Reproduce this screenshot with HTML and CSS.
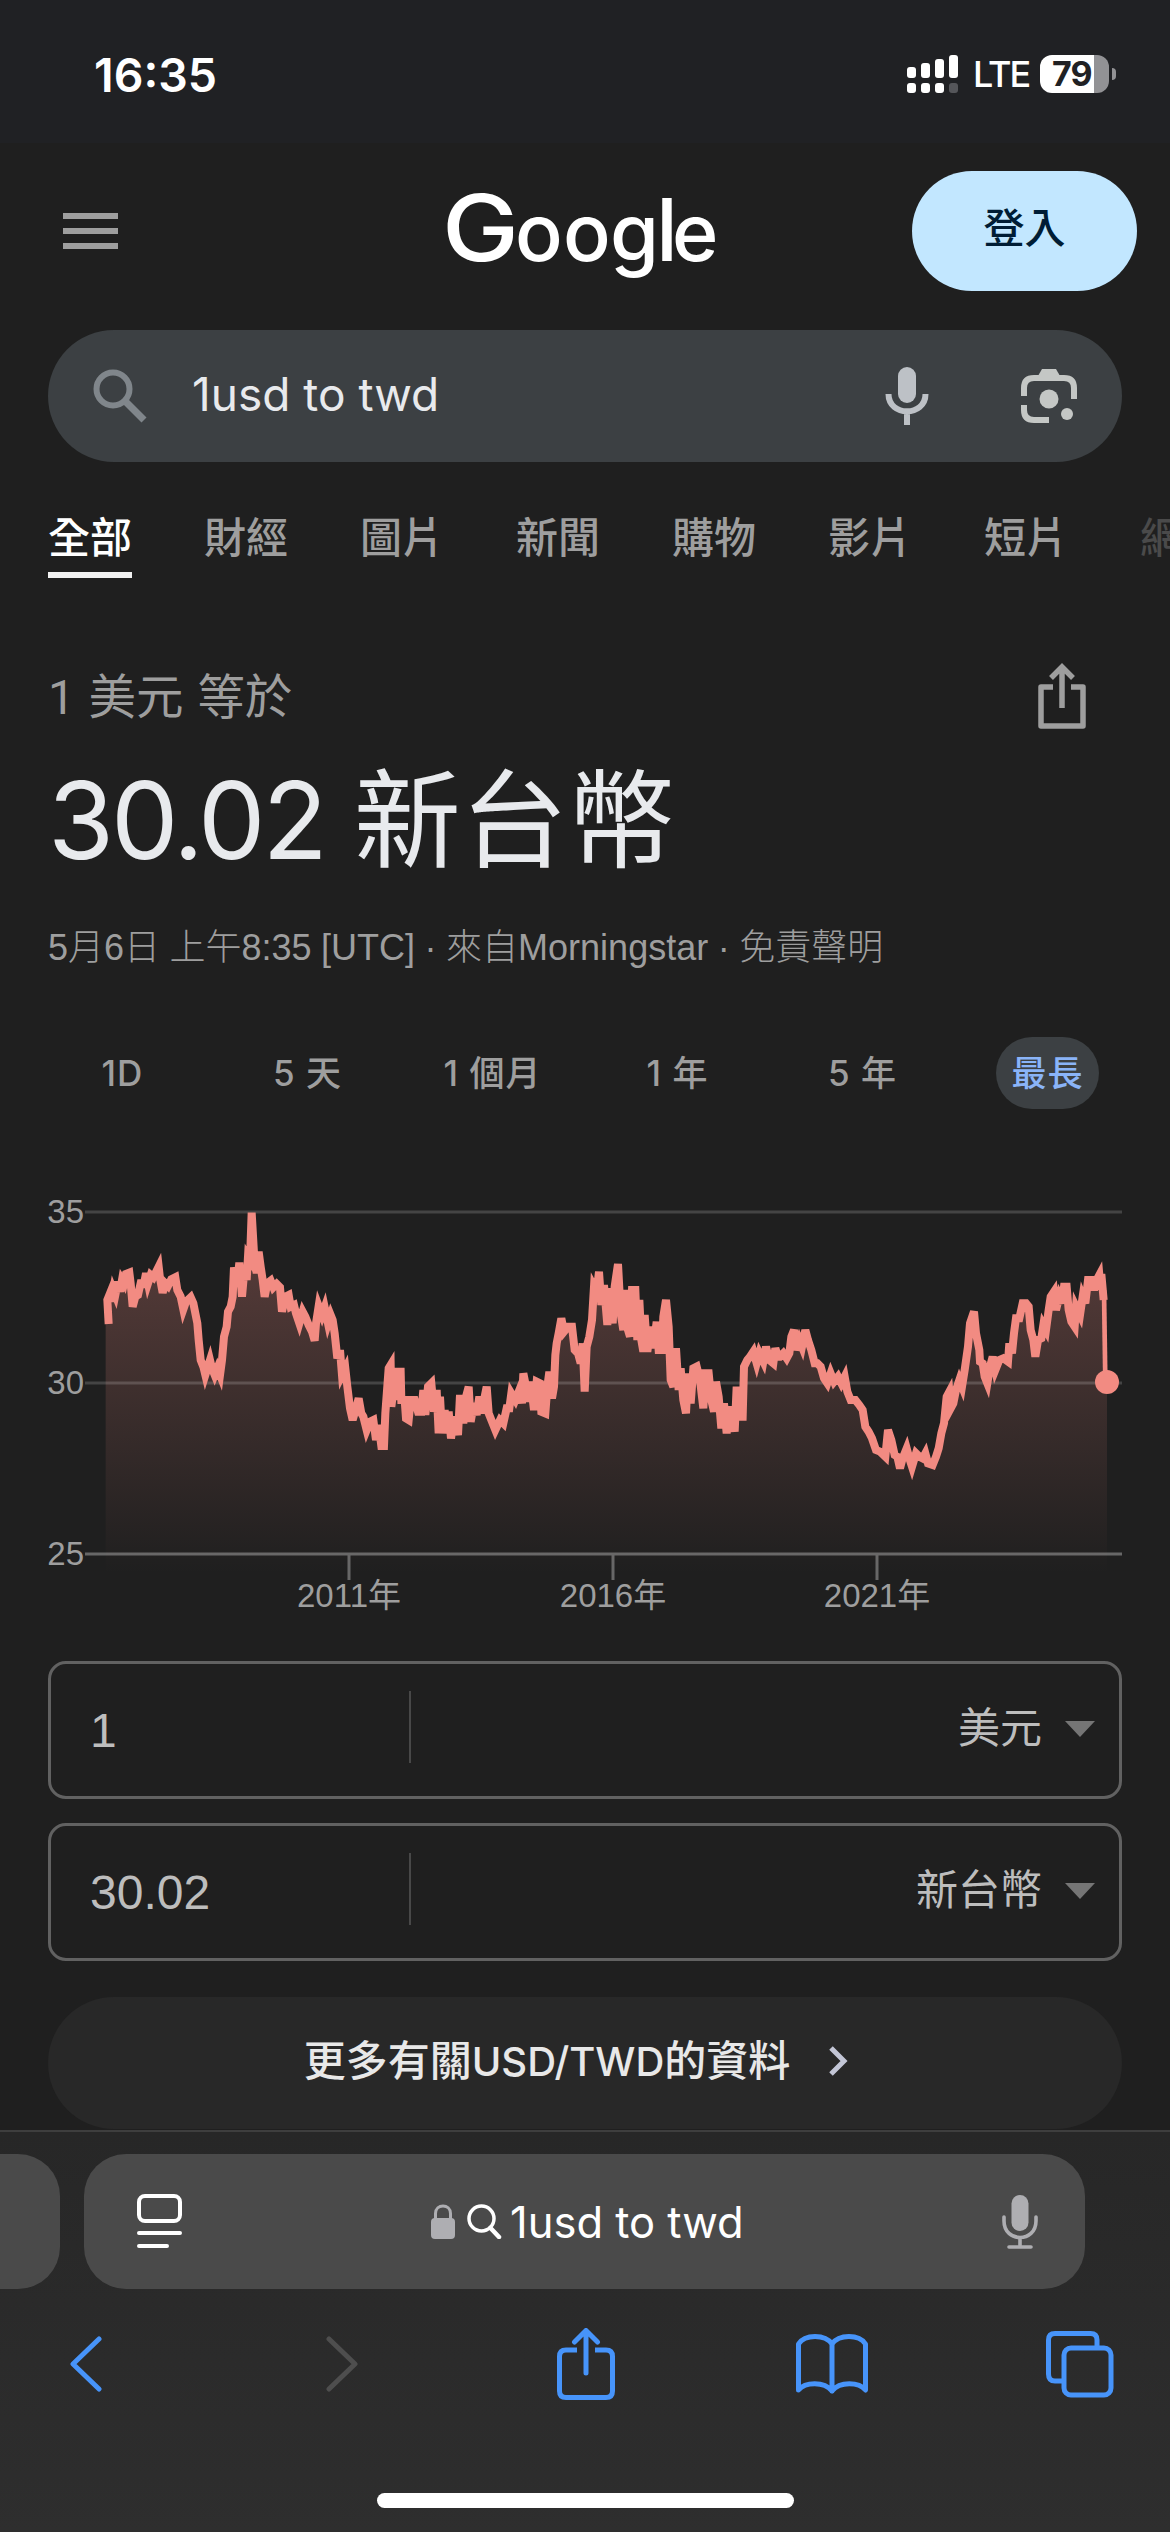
FILE: index.html
```html
<!DOCTYPE html>
<html lang="zh-Hant">
<head>
  <meta charset="UTF-8">
  <title>1usd to twd</title>
  <link rel="stylesheet" href="styles.css">
</head>
<body>
  <div class="status">
    <span class="time">16:35</span>
    <div class="status-right">
      <svg class="signal" width="52" height="38" viewBox="0 0 52 38" fill="#fff">
        <rect x="0" y="12" width="9" height="11" rx="3"/>
        <rect x="14" y="8" width="9" height="15" rx="3"/>
        <rect x="28" y="4" width="9" height="19" rx="3"/>
        <rect x="42" y="0" width="9" height="23" rx="3"/>
        <rect x="0" y="28" width="9" height="10" rx="3"/>
        <rect x="14" y="28" width="9" height="10" rx="3"/>
        <rect x="28" y="28" width="9" height="10" rx="3"/>
        <rect x="42" y="28" width="9" height="10" rx="3" fill="#55565a"/>
      </svg>
      <span class="lte">LTE</span>
      <div class="battery"><span>79</span></div>
      <div class="battery-tip"></div>
    </div>
  </div>

  <header class="header">
    <div class="menu"><i></i><i></i><i></i></div>
    <svg class="logo" width="276" height="110" viewBox="0 0 276 110" fill="#fff">
      <text class="logo-g" x="-6" y="77" textLength="77" lengthAdjust="spacingAndGlyphs">G</text>
      <text y="77"><tspan x="67">o</tspan><tspan x="115">o</tspan><tspan x="162">g</tspan><tspan class="logo-l" x="208">l</tspan><tspan x="224">e</tspan></text>
    </svg>
    <button class="login">登入</button>
  </header>

  <div class="search">
    <svg class="search-icon" width="54" height="54" viewBox="0 0 54 54" fill="none" stroke="#80868b">
      <circle cx="20" cy="20" r="16.5" stroke-width="6"/>
      <path d="M32 32L51 51" stroke-width="7"/>
    </svg>
    <span class="query">1usd to twd</span>
    <svg class="mic" width="44" height="58" viewBox="0 0 44 58">
      <rect x="13" y="0" width="18" height="36" rx="9" fill="#bdc1c6"/>
      <path d="M3.500 27C3.500 50 40.500 50 40.500 27M22 45V58" fill="none" stroke="#bdc1c6" stroke-width="6"/>
    </svg>
    <svg class="lens" width="56" height="54" viewBox="0 0 56 54">
      <path d="M3 27V19Q3 9 13 9H43Q53 9 53 19V30M3 36V41Q3 51 13 51H28" fill="none" stroke="#c4c7c5" stroke-width="6"/>
      <path d="M17 7L21 0H35L39 7Z" fill="#c4c7c5"/>
      <circle cx="28" cy="30" r="9.500" fill="#c4c7c5"/>
      <circle cx="46" cy="45" r="6" fill="#c4c7c5"/>
    </svg>
  </div>

  <nav class="tabs">
    <a class="active">全部</a>
    <a>財經</a>
    <a>圖片</a>
    <a>新聞</a>
    <a>購物</a>
    <a>影片</a>
    <a>短片</a>
    <a class="faded">網頁</a>
  </nav>

  <section class="rate">
    <div class="rate-top">
      <span class="from">1 美元 等於</span>
      <svg width="48" height="66" viewBox="0 0 48 66" fill="none" stroke="#9e9e9e" stroke-width="5.500">
        <path d="M15 24H3V63H45V24H33" stroke-linejoin="round"/>
        <path d="M24 45V6M13 15L24 4L35 15"/>
      </svg>
    </div>
    <div class="amount"><span class="number">30.02</span>新台幣</div>
    <div class="source">5月6日 上午8:35 [UTC] · 來自Morningstar · 免責聲明</div>
  </section>

  <div class="ranges">
    <span>1D</span>
    <span>5 天</span>
    <span>1 個月</span>
    <span>1 年</span>
    <span>5 年</span>
    <span class="selected">最長</span>
  </div>

  <!-- plot units are thirds of a pixel -->
  <svg class="chart" viewBox="-156 -30 3222 1290">
    <defs>
      <linearGradient id="fade" gradientUnits="userSpaceOnUse" x1="0" y1="36" x2="0" y2="1120">
        <stop offset="0" stop-color="#f28b82" stop-opacity=".29"/>
        <stop offset="1" stop-color="#f28b82" stop-opacity="0"/>
      </linearGradient>
    </defs>
    <path id="area" fill="url(#fade)"/>
    <g class="grid">
      <path d="M-45 36H3066M-45 549H3066"/>
      <path class="base" d="M-45 1062H3066M747 1062V1140M1539 1062V1140M2331 1062V1140"/>
    </g>
    <path id="line"/>
    <path class="drop" d="M3012 270L3016 546"/>
    <circle cx="3021" cy="546" r="36" fill="#f28b82"/>
    <g class="axis">
      <text x="-158" y="70">35</text>
      <text x="-158" y="583">30</text>
      <text x="-158" y="1096">25</text>
      <text x="747" y="1222" text-anchor="middle">2011年</text>
      <text x="1539" y="1222" text-anchor="middle">2016年</text>
      <text x="2331" y="1222" text-anchor="middle">2021年</text>
    </g>
  </svg>

  <div class="field">
    <span class="value">1</span>
    <span class="currency">美元</span>
    <i class="arrow"></i>
  </div>
  <div class="field">
    <span class="value">30.02</span>
    <span class="currency">新台幣</span>
    <i class="arrow"></i>
  </div>

  <div class="more">
    <span>更多有關<b>USD/TWD</b>的資料</span>
    <svg width="20" height="30" viewBox="0 0 20 30" fill="none" stroke="#c3c6d6" stroke-width="5"><path d="M3 2L16 15L3 28"/></svg>
  </div>

  <footer class="browser">
    <div class="address-row">
      <div class="prev-tab"></div>
      <div class="address">
        <svg class="reader" width="46" height="56" viewBox="0 0 46 56" fill="none" stroke="#fff" stroke-width="4" stroke-linecap="round">
          <rect x="2" y="2" width="41" height="25" rx="6"/>
          <path d="M2 39H43M2 52H30"/>
        </svg>
        <svg class="lock" width="24" height="35" viewBox="0 0 24 35">
          <rect y="14" width="24" height="21" rx="4" fill="#aeaeb2"/>
          <path d="M4.500 15V9.500C4.500-.500 19.500-.500 19.500 9.500V15" fill="none" stroke="#aeaeb2" stroke-width="3"/>
        </svg>
        <svg class="find" width="35" height="35" viewBox="0 0 35 35" fill="none" stroke="#fff" stroke-width="3.500" stroke-linecap="round">
          <circle cx="14.500" cy="14.500" r="12.500"/>
          <path d="M23.500 24L32 33" stroke-width="4.500"/>
        </svg>
        <span>1usd to twd</span>
        <svg class="dictate" width="36" height="54" viewBox="0 0 36 54">
          <rect x="9.500" width="17" height="36" rx="8.500" fill="#aeaeb2"/>
          <path d="M2 22V26C2 48 34 48 34 26V22M18 43V52M7 52H29" fill="none" stroke="#aeaeb2" stroke-width="3.600" stroke-linecap="round"/>
        </svg>
      </div>
    </div>
    <div class="toolbar">
      <svg class="back" width="32" height="56" viewBox="0 0 32 56"><path d="M29 3L3 28L29 53"/></svg>
      <svg class="forward" width="32" height="56" viewBox="0 0 32 56"><path d="M3 3L29 28L3 53"/></svg>
      <svg class="share" width="58" height="72" viewBox="0 0 58 72">
        <path d="M20 22H9Q2.500 22 2.500 28.500V63Q2.500 69.500 9 69.500H49Q55.500 69.500 55.500 63V28.500Q55.500 22 49 22H38" stroke-linecap="butt"/>
        <path d="M29 45V3M17.500 14L29 2.500L40.500 14"/>
      </svg>
      <svg class="book" width="72" height="60" viewBox="0 0 72 60">
        <path d="M36 57V10C29 0 9 0 2.500 10V56C9 48 28 47 36 57C44 47 63 48 69.500 56V10C63 0 43 0 36 10"/>
      </svg>
      <svg class="windows" width="68" height="67" viewBox="0 0 68 67">
        <path d="M51 16V9Q51 2.500 44.500 2.500H9Q2.500 2.500 2.500 9V43Q2.500 50 9 50H17"/>
        <rect x="18" y="17" width="47" height="47" rx="7"/>
      </svg>
    </div>
    <div class="home"></div>
  </footer>
  <script src="chart.js"></script>
</body>
</html>
```
FILE: styles.css
```css
* {
  box-sizing: border-box;
}
body {
  margin: 0;
  width: 1170px;
  height: 2532px;
  overflow: hidden;
  display: flex;
  flex-direction: column;
  background: #1f1f1f;
  color: #fff;
  font-family: Inter, "Noto Sans CJK TC", sans-serif;
}
svg {
  display: block;
  flex: none;
}

/* status bar */
.status {
  height: 143px;
  flex: none;
  padding: 0 54px 0 94px;
  display: flex;
  justify-content: space-between;
  background: #202124;
}
.time {
  margin-top: 47px;
  font-size: 46.5px;
  line-height: 56px;
  font-weight: 600;
}
.status-right {
  display: flex;
  align-items: center;
  height: 38px;
  margin-top: 55px;
}
.lte {
  width: 81px;
  padding-left: 14px;
  font-size: 36px;
  font-weight: 500;
  letter-spacing: -2px;
}
.battery {
  width: 69px;
  height: 38px;
  border-radius: 12px;
  background: linear-gradient(90deg, #fff 54px, #929295 54px);
  color: #202124;
  font-size: 34px;
  line-height: 38px;
  font-weight: 700;
  letter-spacing: -1px;
  padding-left: 12px;
}
.battery-tip {
  width: 4px;
  height: 12px;
  margin-left: 3px;
  border-radius: 0 4px 4px 0;
  background: #929295;
}

/* page header */
.header {
  height: 187px;
  flex: none;
  padding: 28px 33px 0 63px;
  display: flex;
  align-items: flex-start;
}
.menu {
  width: 55px;
  padding-top: 42px;
  display: flex;
  flex-direction: column;
  gap: 9px;
}
.menu i {
  height: 6px;
  background: #9e9e9e;
}
.logo {
  margin: 13px 0 0 330px;
  overflow: visible;
  font-weight: 500;
  font-size: 79px;
}
.logo-g {
  font-size: 92px;
}
.logo-l {
  font-size: 87px;
}
.login {
  width: 225px;
  height: 120px;
  margin-left: auto;
  padding: 0 0 12px;
  border: none;
  border-radius: 60px;
  background: #c2e7ff;
  color: #001d35;
  font: 500 41px Inter, "Noto Sans CJK TC", sans-serif;
}

/* search box */
.search {
  height: 132px;
  flex: none;
  margin: 0 48px;
  padding: 0 45px;
  display: flex;
  align-items: center;
  border-radius: 66px;
  background: #3c4043;
}
.query {
  flex: 1;
  margin: -5px 0 0 45px;
  font-size: 46px;
  color: #e8eaed;
}
.mic {
  margin-right: 92px;
}

.tabs {
  height: 118px;
  flex: none;
  padding: 40px 0 0 48px;
  display: flex;
  gap: 72px;
  overflow: hidden;
  font-size: 42px;
  line-height: 64px;
  font-weight: 500;
  color: #9e9e9e;
}
.tabs a {
  flex: none;
  height: 76px;
  padding-top: 4px;
}
.tabs .active {
  color: #fff;
  border-bottom: 6px solid #f1f1f1;
}
.tabs .faded {
  color: #4a4a4a;
}

/* exchange rate */
.rate {
  height: 405px;
  flex: none;
  padding: 83px 84px 0 48px;
}
.rate-top {
  height: 66px;
  display: flex;
  justify-content: space-between;
}
.from {
  padding-top: 2px;
  font-family: Roboto, "Noto Sans CJK TC", sans-serif;
  font-size: 47.5px;
  line-height: 66px;
  word-spacing: 2px;
  color: #9e9e9e;
}
.amount {
  margin-top: 13px;
  font-size: 107px;
  line-height: 156px;
  color: #e8eaed;
}
.number {
  letter-spacing: -3px;
  margin-right: 29px;
}
.source {
  margin-top: 24px;
  font-family: "Liberation Sans", "Noto Sans CJK TC", sans-serif;
  font-size: 36px;
  line-height: 52px;
  font-weight: 300;
  word-spacing: -.5px;
  color: #9e9e9e;
}

.ranges {
  height: 72px;
  flex: none;
  margin: 52px 30px 0;
  display: grid;
  grid-template-columns: repeat(6, 185px);
  justify-items: center;
  font-size: 35px;
  line-height: 72px;
  font-weight: 500;
  letter-spacing: 1px;
  color: #9e9e9e;
}
.ranges .selected {
  padding: 0 15px;
  border-radius: 36px;
  background: #3c4043;
  color: #8ab4f8;
}

.chart {
  width: 1074px;
  height: 430px;
  margin: 81px 48px 0;
  overflow: visible;
}
.grid {
  stroke: #fff;
  stroke-opacity: .17;
  stroke-width: 9;
}
.grid .base {
  stroke-opacity: .32;
  fill: none;
}
#line {
  fill: none;
  stroke: #f28b82;
  stroke-width: 24;
}
.drop {
  stroke: #f28b82;
  stroke-width: 14;
}
.axis {
  fill: #9e9e9e;
  font-family: "Liberation Sans", "Noto Sans CJK TC", sans-serif;
  font-size: 99px;
}

/* converter */
.field {
  height: 138px;
  flex: none;
  margin: 41px 48px 0;
  padding: 0 23px 0 39px;
  display: flex;
  align-items: center;
  border: 3px solid #616161;
  border-radius: 18px;
  color: #bdbdbd;
}
.field + .field {
  margin-top: 24px;
}
.value {
  width: 321px;
  height: 72px;
  margin-top: -6px;
  border-right: 2px solid #484848;
  font: 48px/79px "Liberation Sans", sans-serif;
}
.currency {
  margin: -12px 23px 0 auto;
  font-size: 42px;
}
.arrow {
  margin: -2px 1px 0 0;
  border: 15px solid transparent;
  border-top: 16px solid #757575;
  border-bottom: 0;
}

.more {
  height: 132px;
  flex: none;
  margin: 36px 48px 0;
  padding: 0 18px 11px 0;
  display: flex;
  justify-content: center;
  align-items: center;
  gap: 38px;
  border-radius: 66px;
  background: #282828;
  font-size: 42px;
  font-weight: 500;
  color: #e8e8e8;
}
.more svg {
  margin-top: 7px;
}
.more b {
  font-size: 40px;
  font-weight: 500;
}

/* browser chrome */
.browser {
  height: 402px;
  flex: none;
  margin-top: 1px;
  padding-top: 22px;
  border-top: 2px solid #3e3e3e;
  background: linear-gradient(#272727, #2e2e2e);
}
.address-row {
  display: flex;
  gap: 24px;
}
.prev-tab {
  width: 60px;
  height: 135px;
  border-radius: 0 42px 42px 0;
  background: #4a4a4a;
}
.address {
  width: 1001px;
  height: 135px;
  padding: 0 47px 0 53px;
  display: flex;
  align-items: center;
  border-radius: 42px;
  background: #4a4a4a;
  font-size: 43.5px;
}
.lock {
  margin-left: 248px;
}
.find {
  margin: 0 8px 0 12px;
}
.dictate {
  margin-left: auto;
}
.toolbar {
  height: 150px;
  padding-left: 70px;
  display: flex;
  align-items: center;
  fill: none;
  stroke: #4794fa;
  stroke-width: 5;
  stroke-linecap: round;
  stroke-linejoin: round;
}
.forward {
  margin-left: 224px;
  stroke: #4e4e4e;
}
.share {
  margin-left: 199px;
}
.book {
  margin-left: 181px;
}
.windows {
  margin-left: 178px;
}
.home {
  width: 417px;
  height: 15px;
  margin: 54px auto 0;
  border-radius: 8px;
  background: #fff;
}
```
FILE: chart.js
```js
// each part of the series starts at its own x offset
const parts = [
  [0, "26,372 22,300 30,280 34,305 40,270 46,285 54,245 60,275 66,240 72,250 78,222 88,218 92,250 98,320 106,290 114,285 124,240 130,262 138,220 144,250 152,225 160,232 176,200 180,235 188,278 196,250 204,258 214,238 226,232 232,270 242,290 250,328 258,305 272,292 280,310 286,340 292,370 296,420 302,480 310,500 316,525 330,480 336,505 344,525 352,505 360,525 366,480 372,410 380,380 384,335 392,320 398,290 402,202 410,260 418,188 426,290 434,200 440,240 444,170 450,180 455,38 462,160 470,220 476,155 482,200 488,240 494,290 502,250 512,242 520,262 530,252 540,262 546,335 556,290 566,285 572,320 582,315 588,340 598,370 608,335 616,350 626,375 636,395 644,422 648,370 656,318 666,345 674,322 684,370 692,345 698,360 704,400 712,475 720,450 726,525 736,505 742,560 750,625 758,660 768,625 776,595 784,640 790,650 800,690 810,665 820,660 828,720 836,675 844,738 852,738 856,640 866,505 872,495 874,620 884,540 888,600 894,515 902,515 904,600 914,600 918,655 926,660 932,600 944,600 954,635 964,635 970,570 976,645 984,560 994,550 1002,635 1010,570 1016,700"],
  [1020, "0,590 6,700 14,630 20,700 26,635 33,715 42,650 54,705 60,585 70,670 78,590 86,560 92,665 102,610 110,645 118,590 126,640 132,600 140,560 146,640 154,660 166,690 180,660 190,670 200,625 208,625 214,580 226,600 238,570 246,610 250,520 258,560 262,605 272,545 282,630 290,545 300,550 304,635 316,640 322,560 328,515 336,595 342,560 346,465 350,430 356,400 364,355 372,395 384,380 396,380 404,450 414,460 422,490 428,430 434,575 440,440 448,410 456,360 462,260 470,275 477,215 484,315 492,255 502,375 510,265 518,370 524,260 534,192 542,340 550,390 556,270 564,390 570,410 576,270 586,270 592,420 598,300 604,420 610,455 614,345 622,455 632,380 640,445 650,365 656,450 666,450 670,350 678,300 686,380 692,540 700,560 708,445 716,570 722,505 730,600 738,640 744,520 752,610 760,505 770,500 780,540 790,625 796,520 806,520 814,600 822,635 828,545 836,590 844,685 852,610 860,700 868,620 876,650 884,695 890,560 900,650 908,650 912,500 922,480 930,470 940,455 950,490 958,460 970,485 978,440 988,480 1000,490 1006,445 1014,470"],
  [2040, "0,470 10,460 20,475 28,460 34,410 42,390 48,450 58,420 66,440 76,390 84,420 94,450 104,490 112,490 122,500 132,535 142,550 152,520 162,545 174,530 184,550 194,530 202,575 212,600 226,600 238,615 248,630 256,680 266,695 276,715 288,750 300,755 316,770 324,690 334,720 344,765 352,770 360,805 368,775 380,745 388,775 396,800 408,760 418,770 428,775 436,760 444,790 458,795 468,770 476,745 484,700 492,670 500,590 508,575 512,625 520,610 528,570 538,540 546,560 554,510 564,440 570,370 582,335 588,400 598,450 600,485 608,490 614,530 622,550 630,500 638,470 646,510 658,480 670,475 684,485 688,430 696,460 702,400 708,355 718,355 728,310 738,310 746,320 752,390 760,420 766,470 774,420 784,415 790,375 798,390 806,330 812,290 822,275 828,330 838,290 846,310 852,260 860,260 866,330 874,365 884,380 888,320 900,345 908,290 916,310 924,240 936,240 942,270 950,240 958,225 962,270 964,222 971,300"]
];

const points = parts.flatMap(([offset, text]) =>
  text.split(" ").map(pair => {
    const [x, y] = pair.split(",").map(Number);
    return (x + offset) + " " + y;
  })
);

const line = "M" + points.join("L");
document.getElementById("line").setAttribute("d", line);
document.getElementById("area").setAttribute("d", line + "L3021 546V1120H17V345Z");
```
